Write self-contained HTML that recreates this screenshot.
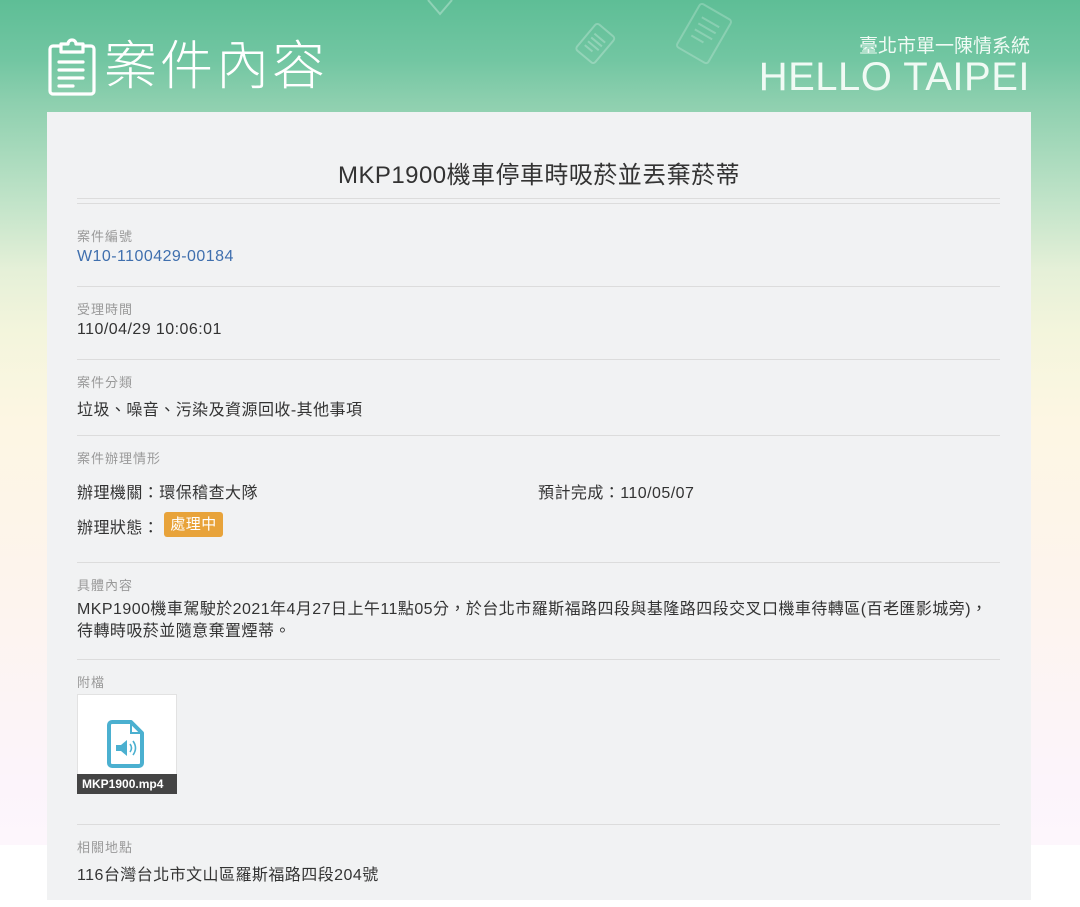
<!DOCTYPE html>
<html><head><meta charset="utf-8"><style>
*{margin:0;padding:0;box-sizing:border-box}
body{width:1080px;height:907px;overflow:hidden;position:relative;font-family:"Liberation Sans","Noto Sans CJK TC",sans-serif;background:#fff;letter-spacing:.45px}
.bg{position:absolute;left:0;top:0;width:1080px;height:845px;background:linear-gradient(to bottom,#5ebe96 0px,#72c6a2 60px,#8ccfae 100px,#c0e3c8 200px,#e5f0d8 270px,#f3f5dc 330px,#fdf6e3 420px,#fdf4ee 600px,#fcf4fb 780px,#fdf6fc 845px)}
.card{position:absolute;left:47px;top:112px;width:984px;height:788px;background:#f1f2f3}
.t{position:absolute;color:#fff}
.lab{position:absolute;left:77px;font-size:13px;color:#999;letter-spacing:1px}
.val{position:absolute;left:77px;font-size:16px;color:#333}
.hr{position:absolute;left:77px;width:923px;height:1px;background:#dcdcdc}
</style></head><body>
<div class="bg"></div>
<svg style="position:absolute;left:568px;top:18px;opacity:.25" width="52" height="55" viewBox="0 0 52 55"><g fill="none" stroke="#fff" stroke-width="2" transform="rotate(40 26 27)"><rect x="14" y="8" width="24" height="34" rx="3"/><path d="M19 18h14M19 23h14M19 28h14M19 33h10"/></g></svg>
<svg style="position:absolute;left:662px;top:0px;opacity:.22" width="80" height="75" viewBox="0 0 80 75"><g fill="none" stroke="#fff" stroke-width="2" transform="rotate(30 40 37)"><rect x="22" y="8" width="36" height="50" rx="3"/><path d="M30 20h20M30 27h20M30 34h20M30 41h14"/></g></svg>
<svg style="position:absolute;left:420px;top:0px;opacity:.3" width="40" height="18"><path d="M8 0L20 14L32 0" fill="none" stroke="#fff" stroke-width="2"/></svg>
<svg style="position:absolute;left:47px;top:38px" width="52" height="58" viewBox="0 0 52 58"><g fill="none" stroke="#fff" stroke-width="3.2" stroke-linecap="round" stroke-linejoin="round"><path d="M14 8H6a3 3 0 0 0-3 3v42a3 3 0 0 0 3 3h38a3 3 0 0 0 3-3V11a3 3 0 0 0-3-3h-8"/><path d="M14 14V6h7a4 4 0 0 1 8 0h7v8z"/><path d="M12 24h24M12 32h24M12 40h24M12 48h14"/></g></svg>
<div class="t" style="left:104px;top:36px;font-size:53px;line-height:62px;font-weight:300;letter-spacing:3px">案件內容</div>
<div class="t" style="right:50px;top:31px;font-size:19px;color:#f0faf4;letter-spacing:0">臺北市單一陳情系統</div>
<div class="t" style="right:50px;top:56px;font-size:40px;line-height:42px;color:#f0faf4;letter-spacing:.5px">HELLO TAIPEI</div>
<div class="card"></div>
<div style="position:absolute;left:47px;width:984px;top:155px;text-align:center;font-size:24px;color:#333">MKP1900機車停車時吸菸並丟棄菸蒂</div>
<div class="hr" style="top:198px"></div><div class="hr" style="top:203px"></div>
<div class="lab" style="top:226px">案件編號</div>
<div class="val" style="top:248px;color:#3f6fae">W10-1100429-00184</div>
<div class="hr" style="top:286px"></div>
<div class="lab" style="top:299px">受理時間</div>
<div class="val" style="top:321px">110/04/29 10:06:01</div>
<div class="hr" style="top:359px"></div>
<div class="lab" style="top:372px">案件分類</div>
<div class="val" style="top:396px">垃圾、噪音、污染及資源回收-其他事項</div>
<div class="hr" style="top:435px"></div>
<div class="lab" style="top:448px">案件辦理情形</div>
<div class="val" style="top:479px">辦理機關：環保稽查大隊</div>
<div class="val" style="left:538px;top:479px">預計完成：110/05/07</div>
<div class="val" style="top:514px">辦理狀態：</div>
<div style="position:absolute;left:164px;top:512px;width:59px;height:25px;background:#e8a33a;border-radius:3px;color:#fff;font-size:15px;line-height:25px;text-align:center">處理中</div>
<div class="hr" style="top:562px"></div>
<div class="lab" style="top:575px">具體內容</div>
<div class="val" style="top:599px;line-height:22px;width:940px">MKP1900機車駕駛於2021年4月27日上午11點05分，於台北市羅斯福路四段與基隆路四段交叉口機車待轉區(百老匯影城旁)，<br>待轉時吸菸並隨意棄置煙蒂。</div>
<div class="hr" style="top:659px"></div>
<div class="lab" style="top:672px">附檔</div>
<div style="position:absolute;left:77px;top:694px;width:100px;height:100px;background:#fff;border:1px solid #e2e2e2"></div>
<svg style="position:absolute;left:106px;top:719px" width="40" height="50" viewBox="0 0 40 50"><path d="M6 3h19l11 11v30a3 3 0 0 1-3 3H6a3 3 0 0 1-3-3V6a3 3 0 0 1 3-3z" fill="none" stroke="#4bb0d0" stroke-width="4" stroke-linejoin="round"/><path d="M25 3v11h11" fill="none" stroke="#4bb0d0" stroke-width="2"/><path d="M10 26h5l6-5v16l-6-5h-5z" fill="#4bb0d0"/><path d="M24 25q3 4 0 8M27 22q5 7 0 14" fill="none" stroke="#4bb0d0" stroke-width="1.6"/></svg>
<div style="position:absolute;left:77px;top:774px;width:100px;height:20px;background:#444;color:#fff;font-size:12px;font-weight:bold;line-height:20px;padding-left:5px;letter-spacing:0">MKP1900.mp4</div>
<div class="hr" style="top:824px"></div>
<div class="lab" style="top:837px">相關地點</div>
<div class="val" style="top:861px">116台灣台北市文山區羅斯福路四段204號</div>
</body></html>
